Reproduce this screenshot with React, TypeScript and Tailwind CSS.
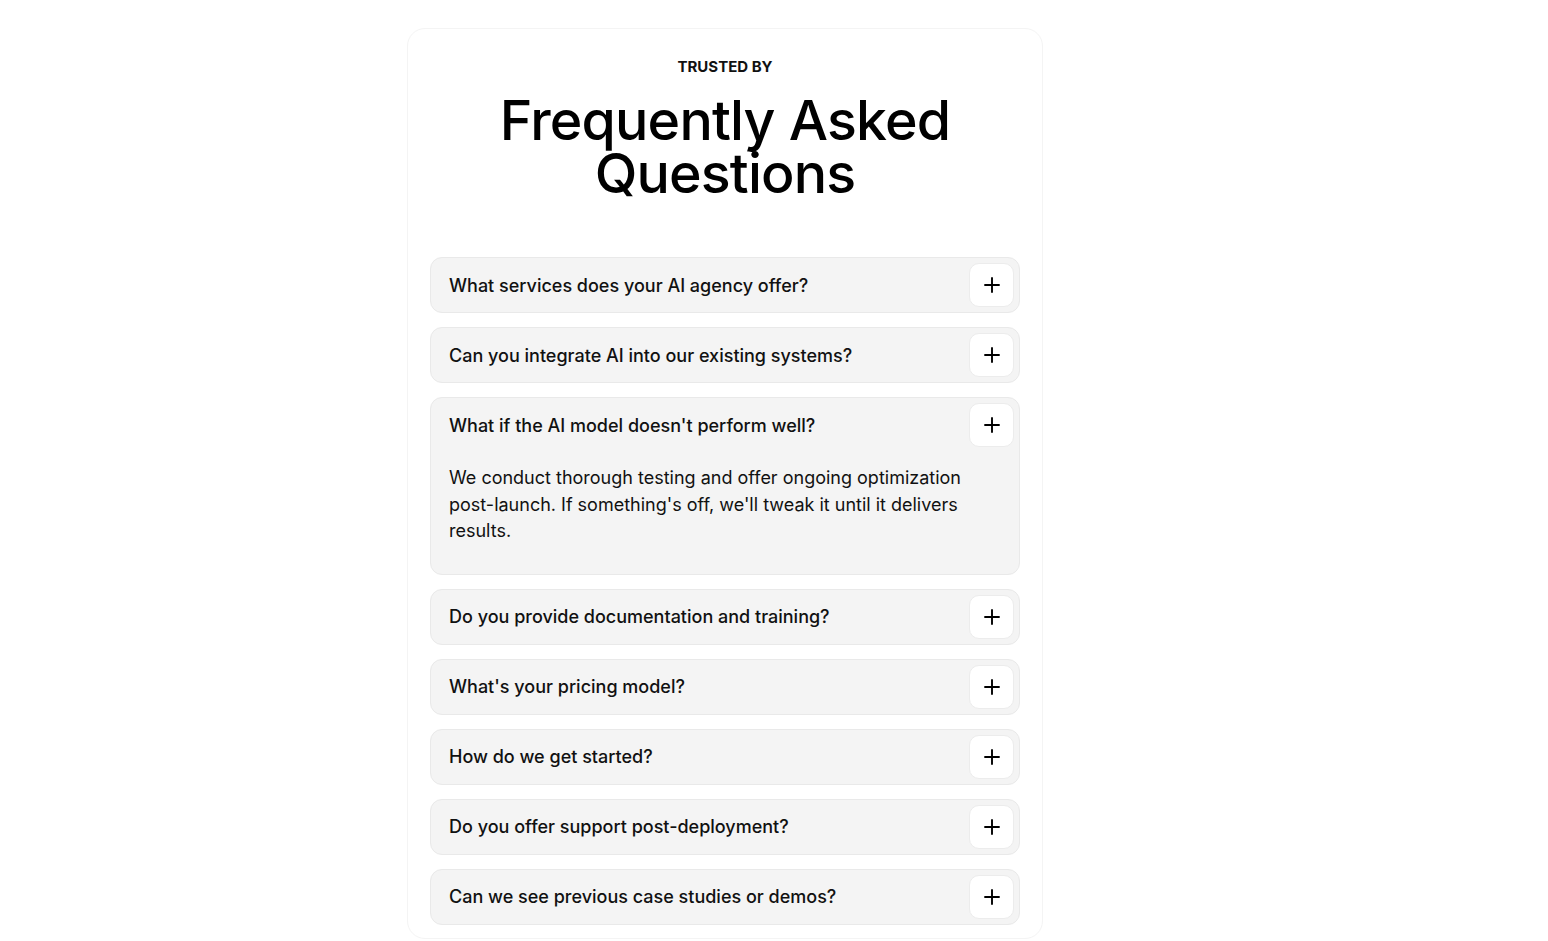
import { Plus } from 'lucide-react';

const faqs = [
  { q: 'What services does your AI agency offer?' },
  { q: 'Can you integrate AI into our existing systems?' },
  {
    q: "What if the AI model doesn't perform well?",
    a: "We conduct thorough testing and offer ongoing optimization post-launch. If something's off, we'll tweak it until it delivers results.",
  },
  { q: 'Do you provide documentation and training?' },
  { q: "What's your pricing model?" },
  { q: 'How do we get started?' },
  { q: 'Do you offer support post-deployment?' },
  { q: 'Can we see previous case studies or demos?' },
];

const FaqItem = ({ q, a }: { q: string; a?: string }) => (
  <div className="rounded-[12px] border border-[#e9e9e9] bg-[#f4f4f4]">
    <div className="flex h-[54px] items-center justify-between pl-[18px] pr-[5px]">
      <span className="text-[18px] font-medium text-[#111]">{q}</span>
      <button className="flex h-[44px] w-[45px] items-center justify-center rounded-[10px] border border-[#ececec] bg-white">
        <Plus className="h-[24px] w-[24px] text-black" strokeWidth={1.9} />
      </button>
    </div>
    {a && (
      <p className="pl-[18px] pr-[40px] pt-[13px] pb-[29px] text-[18px] leading-[26.5px] text-[#111]">
        {a}
      </p>
    )}
  </div>
);

export default function App() {
  return (
    <div className="min-h-screen bg-white pt-[28px] font-['Inter',sans-serif]">
      <div className="ml-[407px] w-[636px] rounded-[18px] border border-[#f4f4f4] px-[22px] pt-[28px] pb-[13px]">
        <p className="text-center text-[15px] font-bold leading-[20px] text-[#111]">
          TRUSTED BY
        </p>
        <h1 className="mt-[16px] text-center text-[55.5px] font-medium leading-[53px] tracking-[-0.015em] text-black">
          Frequently Asked
          <br />
          Questions
        </h1>
        <div className="mt-[58px] flex flex-col gap-[14px]">
          {faqs.map((f) => (
            <FaqItem key={f.q} q={f.q} a={f.a} />
          ))}
        </div>
      </div>
    </div>
  );
}
